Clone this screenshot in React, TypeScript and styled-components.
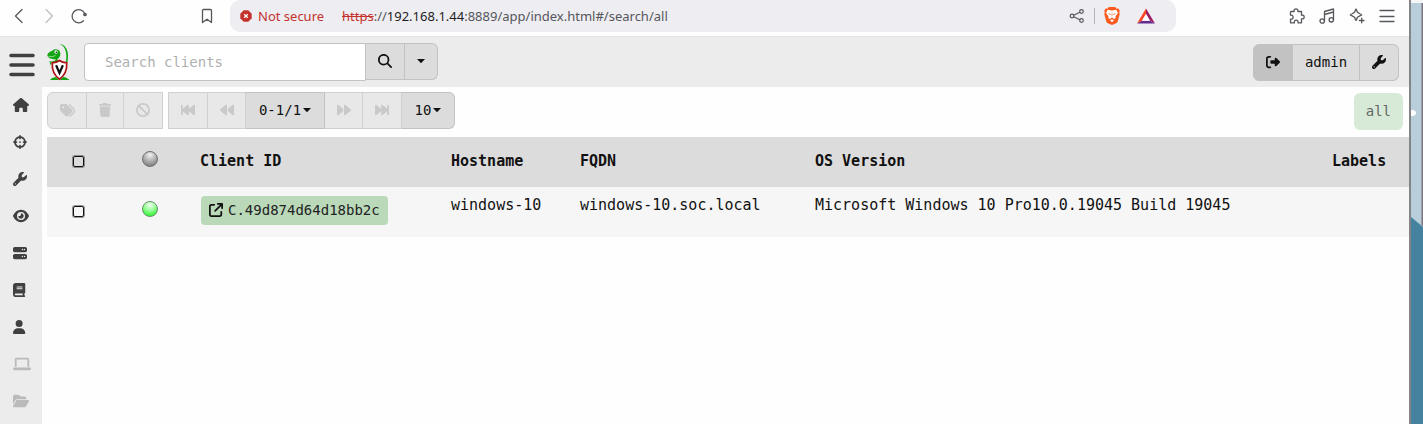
import React from "react";
import styled, { createGlobalStyle, css } from "styled-components";
import {
  FaArrowUpRightFromSquare, FaBackward, FaBackwardFast, FaBan, FaBook, FaCrosshairs, FaEye,
  FaFolderOpen, FaForward, FaForwardFast, FaHouse, FaLaptop, FaMagnifyingGlass, FaRightFromBracket,
  FaServer, FaTags, FaTrash, FaUser, FaWrench,
} from "react-icons/fa6";

const mono = `"DejaVu Sans Mono", "Liberation Mono", monospace`;

const GlobalStyle = createGlobalStyle`
  * { box-sizing: border-box; }
  body { margin: 0; background: #fefefe; color: #111; font: 14px/20px ${mono}; }
  button, input { font: inherit; color: inherit; margin: 0; }
  svg { display: block; flex: none; }
`;

const Screen = styled.div`
  display: flex;
  min-height: 100vh;
`;
const Browser = styled.div`
  flex: 1;
  min-width: 0;
  display: flex;
  flex-direction: column;
  border-right: 2px solid #858585;
`;
const Desktop = styled.aside`
  width: 12px;
  display: flex;
  background: #45829f;
`;

const BrowserBar = styled.header`
  height: 37px;
  display: flex;
  align-items: flex-start;
  border-bottom: 1px solid #e1e1e6;
  background: #fefefe;
  font: 13px/20px "Noto Sans", sans-serif;
`;
const NavGroup = styled.nav`
  width: 230px;
  height: 32px;
  padding: 0 15px 0 11px;
  display: flex;
  align-items: center;
  gap: 14px;
`;
const ChromeButton = styled.button<{ $faint?: boolean; $end?: boolean }>`
  width: 16px;
  height: 32px;
  padding: 0;
  border: 0;
  background: none;
  display: flex;
  align-items: center;
  justify-content: center;
  color: ${(p) => (p.$faint ? "#bfbfc3" : "#56575b")};
  ${(p) => p.$end && css`margin-left: auto;`}
`;
const Address = styled.div`
  flex: 1;
  min-width: 0;
  height: 32px;
  padding: 0 22px 0 10px;
  display: flex;
  align-items: center;
  border-radius: 10px;
  background: #eeedf2;
  white-space: nowrap;
`;
const Insecure = styled.span`
  width: 102px;
  display: flex;
  align-items: center;
  gap: 6px;
  color: #c5322d;
`;
const Url = styled.span`
  flex: 1;
  color: #55565b;
  s { color: #c5322d; }
  b { font-weight: 400; color: #1d1d20; }
`;
const AddressTools = styled.div`
  display: flex;
  align-items: center;
  gap: 18px;
`;
const Separator = styled.span`
  width: 1px;
  height: 16px;
  margin: 0 -9px;
  background: #b5b5bb;
`;
const ChromeTools = styled.div`
  width: 233px;
  height: 32px;
  padding-right: 14px;
  display: flex;
  align-items: center;
  justify-content: flex-end;
  gap: 14px;
`;

const AppHeader = styled.div`
  height: 50px;
  padding: 6px 10px 0 9px;
  display: flex;
  align-items: flex-start;
  background: #ececec;
`;
const MenuButton = styled.button`
  width: 26px;
  height: 37px;
  padding: 4px 0 0;
  border: 0;
  background: none;
  color: #404040;
`;
const LogoLink = styled.a`
  margin: 0 13px 0 12px;
`;
const SearchForm = styled.form`
  display: flex;
`;
const SearchInput = styled.input`
  width: 282px;
  height: 38px;
  padding: 0 20px;
  border: 1px solid #c2c2c2;
  border-radius: 4px 0 0 4px;
  background: #fff;
  outline: 0;
  &::placeholder { color: #b0b0b0; opacity: 1; }
`;
const Group = styled.div<{ $end?: boolean }>`
  display: flex;
  ${(p) => p.$end && css`margin: 1px 0 0 auto;`}
`;
const ToolButton = styled.button<{ $w: number; $active?: boolean; $first?: boolean; $round?: "left" | "right" }>`
  width: ${(p) => p.$w}px;
  height: 37px;
  padding: 0 0 2px;
  display: flex;
  align-items: center;
  justify-content: center;
  gap: 2px;
  border: 1px solid #c2c2c2;
  border-left-width: ${(p) => (p.$first || p.$round === "left" ? 1 : 0)}px;
  border-radius: ${(p) => (p.$round === "left" ? "6px 0 0 6px" : p.$round === "right" ? "0 6px 6px 0" : "0")};
  background: ${(p) => (p.$active ? "#c2c2c2" : "#dcdcdc")};
  color: #111;
  &:disabled { background: #e8e8e8; border-color: #d0d0d0; color: #c9c9c9; padding-bottom: 1px; }
`;

const Body = styled.div`
  flex: 1;
  display: flex;
`;
const Sidebar = styled.nav`
  width: 42px;
  padding-left: 13px;
  background: #ececec;
`;
const SideLink = styled.a<{ $off?: boolean }>`
  height: 37px;
  padding-bottom: 1px;
  display: flex;
  align-items: center;
  color: ${(p) => (p.$off ? "#bababa" : "#404040")};
`;
const Main = styled.main`
  flex: 1;
  min-width: 0;
  padding: 5px 0 0 5px;
`;
const Toolbar = styled.div`
  height: 45px;
  padding-right: 6px;
  display: flex;
  align-items: flex-start;
  gap: 5px;
`;
const FilterButton = styled.button`
  height: 37px;
  margin: 1px 0 0 auto;
  padding: 0 12px 2px;
  border: 0;
  border-radius: 6px;
  background: #d7ead7;
  color: #666;
`;

const Table = styled.table`
  width: 100%;
  table-layout: fixed;
  border-collapse: collapse;
  font-size: 15px;
  text-align: left;
  white-space: nowrap;
  thead tr { background: #dcdcdc; }
  tbody tr { background: #f6f6f6; }
  tr { height: 50px; }
`;
const Col = styled.col<{ $w?: number }>`
  width: ${(p) => (p.$w ? `${p.$w}px` : "auto")};
`;
const HeadCell = styled.th<{ $top?: number }>`
  padding: ${(p) => p.$top ?? 14}px 0 0;
  vertical-align: top;
`;
const Cell = styled.td<{ $top?: number }>`
  padding: ${(p) => p.$top ?? 8}px 0 0;
  vertical-align: top;
`;
const Check = styled.input`
  appearance: none;
  display: block;
  width: 11px;
  height: 11px;
  margin-left: 26px;
  border: 1px solid #111;
  border-radius: 2px;
  box-shadow: 0 0 0 1px #55555599;
  &:checked { background: #111; }
`;
const Status = styled.span<{ $online?: boolean }>`
  display: block;
  width: 16px;
  height: 16px;
  border: 1px solid ${(p) => (p.$online ? "#6f8f6f" : "#707070")};
  border-radius: 50%;
  background: ${(p) =>
    p.$online
      ? "radial-gradient(circle at 50% 22%, #f2fff2 0, #a0ffa0 40%, #2df52d 85%)"
      : "radial-gradient(circle at 50% 22%, #f2f2f2 0, #b9b9b9 40%, #808080 85%)"};
`;
const ClientLink = styled.a`
  height: 29px;
  margin-left: 1px;
  padding: 0 8px 1px;
  display: inline-flex;
  align-items: center;
  gap: 5px;
  border-radius: 4px;
  background: #b9d9b9;
  color: #222;
  font-size: 14px;
  text-decoration: none;
  svg { color: #111; }
`;

const line = { fill: "none", stroke: "currentColor", strokeWidth: 1.3, strokeLinecap: "round", strokeLinejoin: "round" } as const;

const Caret = () => (
  <svg width="8" height="8" viewBox="0 0 8 8"><path d="M0 2h8L4 6.200z" fill="currentColor" /></svg>
);

const Logo = () => (
  <svg width="24" height="38" viewBox="0 0 24 38">
    <path d="M12.500.8C17.500 1.500 21 6 21 12.500c0 4-.4 7.500-1.500 9-.9-1.500-.6-2.500-.4-4C20 11 19 3.500 12.500.8z" fill="#12a512" />
    <path d="M.3 12.500C.5 9.500 3.500 8.800 5.500 7.500 7.500 5.600 11.500 6 12.800 8.500c1.200 2.600.4 5.500-1.600 7l-.9 1 1.700 2.500H7.500l1.200-2.700C5.500 16.500 1.500 15.500.3 12.500z" fill="#12a512" />
    <path d="M1.500 13.200c2.700.8 5 .5 7-.9" stroke="#c8ecc8" strokeWidth=".7" fill="none" />
    <circle cx="9" cy="9" r="1.700" fill="#fff" /><circle cx="9.300" cy="9.200" r=".8" fill="#111" />
    <path d="M2.500 18.500c2 1.500 3.500.5 5.500-.5M3.500 21.500l.5-2.500" stroke="#12a512" strokeWidth="1.300" fill="none" />
    <path d="M3 37c1-1.500 3-2.700 6-3l3 3zM13 37l3-3c3 .2 5 1.500 6.500 3z" fill="#12a512" />
    <path d="M12.500 17.500c2.100 1.600 4.500 2.200 7.200 2.400.5 7.100-1.700 12.300-7.200 16.300-5.500-4-7.700-9.200-7.200-16.300 2.700-.2 5.100-.8 7.200-2.400z" fill="#fff" stroke="#b01116" strokeWidth="1.700" />
    <path d="M9.100 22.300l3.400 7.700 3.400-7.700" fill="none" stroke="#111" strokeWidth="2.200" />
  </svg>
);

const Lion = () => (
  <svg width="16" height="18" viewBox="0 0 16 18">
    <path d="M4.800 0h6.400l1.500 1.700 1.800-.2 1.300 2.600-.6 1.500.5 1.600-2 7.200c-.3.900-.8 1.300-1.500 1.800L8 18l-4.200-1.800c-.7-.5-1.200-.9-1.500-1.800L.3 7.200l.5-1.600-.6-1.500 1.300-2.600 1.800.2z" fill="#fb5a1c" />
    <path d="M8 3.600l1.800-.4 2.400-.4 1.800 2.900-1.500 2.200-1 1.600.2 1.400-1.500 1-.7-.5L8 10.600l-1.500.8-.7.500-1.500-1 .2-1.400-1-1.600L2 5.700l1.800-2.900 2.400.4z" fill="#fff" />
    <path d="M8 12.300l2 1-2 1.900-2-1.900z" fill="#fff" />
    <path d="M3.900 6.200l2.900.7-.6 1.100zM12.100 6.200l-2.900.7.6 1.100z" fill="#fb5a1c" />
    <path d="M7.400 5.800h1.200l.2 3.200L8 9.800l-.8-.8z" fill="#fdc0a6" />
  </svg>
);

const sideItems = [
  ["Home", FaHouse, 16], ["Hunts", FaCrosshairs, 14], ["Artifacts", FaWrench, 14], ["Events", FaEye, 16],
  ["Server", FaServer, 14], ["Notebooks", FaBook, 14], ["Users", FaUser, 14], ["Host", FaLaptop, 18],
  ["Files", FaFolderOpen, 16],
] as const;

export default function App() {
  return (
    <Screen>
      <GlobalStyle />
      <Browser>
        <BrowserBar>
          <NavGroup>
            <ChromeButton aria-label="Back"><svg width="16" height="16" {...line}><path d="M11 1.500L4.500 8l6.500 6.500" /></svg></ChromeButton>
            <ChromeButton aria-label="Forward" $faint><svg width="16" height="16" {...line}><path d="M5 1.500L11.500 8 5 14.500" /></svg></ChromeButton>
            <ChromeButton aria-label="Reload">
              <svg width="16" height="16" {...line}><path d="M12.500 12.800A6.600 6.600 0 1 1 13.700 5.500" /><circle cx="14" cy="6.500" r="1.200" fill="currentColor" /></svg>
            </ChromeButton>
            <ChromeButton aria-label="Bookmark" $end><svg width="16" height="16" {...line}><path d="M4.500 1.500h7a1 1 0 0 1 1 1v12L8 11.200l-4.500 3.300v-12a1 1 0 0 1 1-1z" /></svg></ChromeButton>
          </NavGroup>
          <Address>
            <Insecure>
              <svg width="12" height="12" viewBox="0 0 12 12"><path d="M3.700.3h4.600l3.400 3.400v4.600l-3.400 3.400H3.700L.3 8.300V3.700z" fill="#c5322d" /><path d="M4.200 4.200l3.600 3.600M7.800 4.200L4.200 7.800" stroke="#fff" strokeWidth="1.300" /></svg>
              Not secure
            </Insecure>
            <Url><s>https</s>://<b>192.168.1.44</b>:8889/app/index.html#/search/all</Url>
            <AddressTools>
              <ChromeButton aria-label="Share">
                <svg width="16" height="16" {...line} strokeWidth={1.200}><circle cx="3" cy="8" r="1.800" /><circle cx="12.500" cy="3.500" r="1.800" /><circle cx="12.500" cy="12.500" r="1.800" /><path d="M4.700 7.200l6.100-2.900M4.700 8.800l6.100 2.900" /></svg>
              </ChromeButton>
              <Separator />
              <ChromeButton aria-label="Brave Shields"><Lion /></ChromeButton>
              <ChromeButton aria-label="Rewards">
                <svg width="18" height="16" viewBox="0 0 18 16"><path d="M9 .5L0 15.500l5-2.800L9 6z" fill="#ff4724" /><path d="M9 .5l9 15-5-2.800L9 6z" fill="#9e1f63" /><path d="M0 15.500h18l-5-2.800H5z" fill="#662d91" /><path d="M9 6l4 6.700H5z" fill="#fff" /></svg>
              </ChromeButton>
            </AddressTools>
          </Address>
          <ChromeTools>
            <ChromeButton aria-label="Extensions">
              <svg width="16" height="16" {...line}><path d="M2 3.500h3.200C4.700 1.800 5.600.8 7 .8s2.300 1 1.800 2.700h3.700v3.700c1.700-.5 2.700.4 2.700 1.800s-1 2.300-2.700 1.800V14.800H9c.4-1.600-.5-2.600-1.800-2.600s-2.200 1-1.800 2.600H1.500v-3.700c1.600.4 2.600-.6 2.600-1.900S3.100 6.800 1.500 7.200V4z" /></svg>
            </ChromeButton>
            <ChromeButton aria-label="Media">
              <svg width="16" height="16" {...line}><path d="M5.500 13V3.500l9-2.500v10.500M5.500 6.500l9-2.500" /><circle cx="3.200" cy="13" r="2.200" /><circle cx="12.300" cy="11.800" r="2.200" /></svg>
            </ChromeButton>
            <ChromeButton aria-label="Assistant">
              <svg width="16" height="16" {...line}><path d="M7 1.200c.6.200.7 1.800 1.400 3s3.600 1.700 4.300 2.600c-.7.900-3.500 1.300-4.300 2.600s-.8 2.900-1.400 3c-.6-.1-.7-1.700-1.400-3S2 7.700 1.300 6.800c.7-.9 3.600-1.400 4.300-2.600s.8-2.800 1.400-3zM12.700 10.200v4.600M10.400 12.500H15" /></svg>
            </ChromeButton>
            <ChromeButton aria-label="Menu"><svg width="16" height="16" {...line}><path d="M1 2.500h14M1 8.500h14M1 13.500h14" /></svg></ChromeButton>
          </ChromeTools>
        </BrowserBar>

        <AppHeader>
          <MenuButton aria-label="Toggle menu">
            <svg width="26" height="26" stroke="currentColor" strokeWidth="3.600" strokeLinecap="round"><path d="M2 4.500h22M2 14h22M2 23.500h22" /></svg>
          </MenuButton>
          <LogoLink href="#" aria-label="Home"><Logo /></LogoLink>
          <SearchForm>
            <SearchInput aria-label="Search clients" placeholder="Search clients" />
            <ToolButton type="button" $w={39} aria-label="Search"><FaMagnifyingGlass size={14} /></ToolButton>
            <ToolButton type="button" $w={33} $round="right" aria-label="Search options"><Caret /></ToolButton>
          </SearchForm>
          <Group $end>
            <ToolButton $w={40} $round="left" $active aria-label="Log out"><FaRightFromBracket size={14} /></ToolButton>
            <ToolButton $w={67}>admin</ToolButton>
            <ToolButton $w={39} $round="right" aria-label="Settings"><FaWrench size={14} /></ToolButton>
          </Group>
        </AppHeader>

        <Body>
          <Sidebar>
            {sideItems.map(([name, Icon, size], i) => (
              <SideLink key={name} href="#" aria-label={name} $off={i > 6}>
                <Icon size={size} preserveAspectRatio="xMinYMid" />
              </SideLink>
            ))}
          </Sidebar>
          <Main>
            <Toolbar>
              <Group>
                <ToolButton $w={40} $round="left" disabled aria-label="Label clients"><FaTags size={15} /></ToolButton>
                <ToolButton $w={37} disabled aria-label="Delete clients"><FaTrash size={14} /></ToolButton>
                <ToolButton $w={39} disabled aria-label="Kill clients"><FaBan size={14} /></ToolButton>
              </Group>
              <Group>
                <ToolButton $w={40} $first disabled aria-label="First page"><FaBackwardFast size={14} /></ToolButton>
                <ToolButton $w={38} disabled aria-label="Previous page"><FaBackward size={14} /></ToolButton>
                <ToolButton $w={79}>0-1/1<Caret /></ToolButton>
                <ToolButton $w={38} disabled aria-label="Next page"><FaForward size={14} /></ToolButton>
                <ToolButton $w={39} disabled aria-label="Last page"><FaForwardFast size={14} /></ToolButton>
                <ToolButton $w={53} $round="right">10<Caret /></ToolButton>
              </Group>
              <FilterButton>all</FilterButton>
            </Toolbar>
            <Table>
              <colgroup><Col $w={95} /><Col $w={58} /><Col $w={251} /><Col $w={129} /><Col $w={235} /><Col /><Col $w={77} /></colgroup>
              <thead>
                <tr>
                  <HeadCell $top={19}><Check type="checkbox" aria-label="Select all clients" /></HeadCell>
                  <HeadCell><Status role="img" aria-label="Status" /></HeadCell>
                  <HeadCell>Client ID</HeadCell>
                  <HeadCell>Hostname</HeadCell>
                  <HeadCell>FQDN</HeadCell>
                  <HeadCell>OS Version</HeadCell>
                  <HeadCell>Labels</HeadCell>
                </tr>
              </thead>
              <tbody>
                <tr>
                  <Cell $top={19}><Check type="checkbox" aria-label="Select windows-10" /></Cell>
                  <Cell $top={14}><Status $online role="img" aria-label="Online" /></Cell>
                  <Cell $top={9}><ClientLink href="#"><FaArrowUpRightFromSquare size={14} />C.49d874d64d18bb2c</ClientLink></Cell>
                  <Cell>windows-10</Cell>
                  <Cell>windows-10.soc.local</Cell>
                  <Cell>Microsoft Windows 10 Pro10.0.19045 Build 19045</Cell>
                  <Cell />
                </tr>
              </tbody>
            </Table>
          </Main>
        </Body>
      </Browser>
      <Desktop aria-hidden="true">
        <svg width="12" height="424" viewBox="0 0 12 424">
          <path d="M0 0h12v227L0 217z" fill="#b8cedb" />
          <path d="M0 0h12v3H0z" fill="#f4f6f7" />
          <path d="M10.500 3h1.500v223.500l-1.500-1.500z" fill="#7d7480" />
          <ellipse cx="1" cy="113" rx="4" ry="3" fill="#fff" />
        </svg>
      </Desktop>
    </Screen>
  );
}
